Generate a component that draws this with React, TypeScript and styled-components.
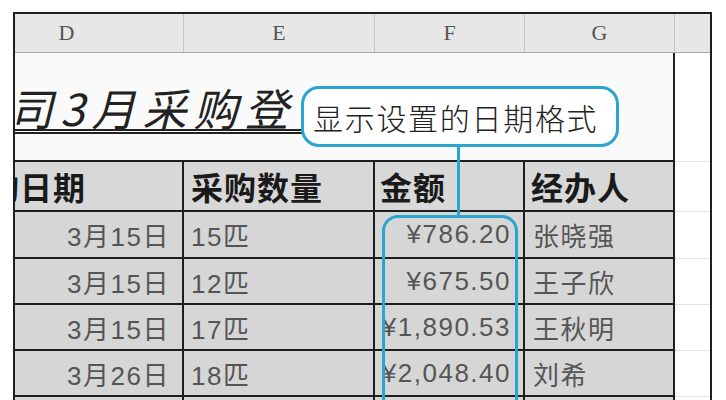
import React from "react";
import styled, { createGlobalStyle } from "styled-components";

const GlobalStyle = createGlobalStyle`
  html, body { margin: 0; padding: 0; background: #ffffff; overflow: hidden; }
  body { font-family: "Liberation Sans", "Noto Sans CJK SC", sans-serif; }
`;

const CYAN = "#2aa5cf";
const LINE = "#1e1e1e";
const COLS = "234px 191px 150px 150px 36px";

const Page = styled.div`
  position: relative;
  width: 726px;
  height: 400px;
  padding: 12px 14px 0 13px;
  box-sizing: border-box;
  overflow: hidden;
`;

const Frame = styled.div`
  height: 388px;
  border-left: 2px solid ${LINE};
  border-top: 2px solid ${LINE};
  border-right: 2px solid ${LINE};
  overflow: hidden;
  box-sizing: border-box;
`;

const Sheet = styled.div`
  margin-left: -65px;
  width: 763px;
  display: flex;
  flex-direction: column;
`;

const ColHeaderRow = styled.div`
  display: grid;
  grid-template-columns: ${COLS};
  height: 38px;
  background: #e7e7e7;
  border-bottom: 1px solid #a8a8a8;
`;

const ColLetter = styled.div`
  display: flex;
  align-items: center;
  justify-content: center;
  border-right: 1px solid #c6c6c6;
  font-family: "Liberation Serif", serif;
  font-size: 22px;
  color: #555;
  &:last-child { border-right: none; }
`;

const TitleRow = styled.div`
  display: grid;
  grid-template-columns: ${COLS};
  height: 109px;
`;

const TitleCell = styled.div`
  grid-column: 1 / span 4;
  background: #fafafa;
  border-right: 2px solid ${LINE};
  border-bottom: 2px solid ${LINE};
  display: flex;
  align-items: flex-end;
  padding: 0 0 31px 8px;
  overflow: hidden;
  white-space: nowrap;
`;

const TitleText = styled.span`
  font-family: "Noto Sans CJK SC", sans-serif;
  font-size: 44px;
  line-height: 44px;
  font-style: italic;
  letter-spacing: 7px;
  color: #222;
  text-decoration: underline double;
  text-decoration-thickness: 1.5px;
  text-underline-offset: 3px;
`;

const BlankCell = styled.div`
  background: #ffffff;
  border-bottom: 1px solid #e2e2e2;
`;

const Row = styled.div<{ $h: number }>`
  display: grid;
  grid-template-columns: ${COLS};
  height: ${(p) => p.$h}px;
`;

const Cell = styled.div<{ $align?: "left" | "right"; $pad: number; $head?: boolean }>`
  display: flex;
  align-items: center;
  justify-content: ${(p) => (p.$align === "right" ? "flex-end" : "flex-start")};
  padding-left: ${(p) => (p.$align === "right" ? 0 : p.$pad)}px;
  padding-right: ${(p) => (p.$align === "right" ? p.$pad : 0)}px;
  background: ${(p) => (p.$head ? "#d8d8d8" : "#d6d6d6")};
  border-right: 2px solid ${LINE};
  border-bottom: 2px solid ${LINE};
  white-space: nowrap;
  overflow: hidden;
  font-family: "Liberation Sans", "Noto Sans CJK SC", sans-serif;
  font-size: ${(p) => (p.$head ? 32 : 26)}px;
  font-weight: ${(p) => (p.$head ? 700 : 400)};
  color: ${(p) => (p.$head ? "#1a1a1a" : "#555555")};
  letter-spacing: ${(p) => (p.$head ? 1 : 1.5)}px;
`;

const Callout = styled.div`
  position: absolute;
  left: 301px;
  top: 86px;
  width: 318px;
  height: 61px;
  box-sizing: border-box;
  border: 3px solid ${CYAN};
  border-radius: 18px;
  background: #ffffff;
  display: flex;
  align-items: center;
  padding-left: 9px;
  font-family: "Noto Sans CJK SC", sans-serif;
  font-size: 30px;
  font-weight: 300;
  letter-spacing: 1.7px;
  color: #222;
  white-space: nowrap;
`;

const Connector = styled.div`
  position: absolute;
  left: 457px;
  top: 146px;
  width: 3px;
  height: 70px;
  background: ${CYAN};
`;

const Highlight = styled.div`
  position: absolute;
  left: 382px;
  top: 215px;
  width: 136px;
  height: 200px;
  box-sizing: border-box;
  border: 3px solid ${CYAN};
  border-radius: 16px;
`;

const rows = [
  ["3月15日", "15匹", "¥786.20", "张晓强"],
  ["3月15日", "12匹", "¥675.50", "王子欣"],
  ["3月15日", "17匹", "¥1,890.53", "王秋明"],
  ["3月26日", "18匹", "¥2,048.40", "刘希"],
  ["", "", "", ""],
];

export default function App() {
  return (
    <>
      <GlobalStyle />
      <Page>
        <Frame>
          <Sheet>
            <ColHeaderRow>
              {["D", "E", "F", "G", ""].map((l, i) => (
                <ColLetter key={i}>{l}</ColLetter>
              ))}
            </ColHeaderRow>
            <TitleRow>
              <TitleCell>
                <TitleText>公司3月采购登记表</TitleText>
              </TitleCell>
              <BlankCell />
            </TitleRow>
            <Row $h={50}>
              <Cell $head $pad={4}>采购日期</Cell>
              <Cell $head $pad={7}>采购数量</Cell>
              <Cell $head $pad={5}>金额</Cell>
              <Cell $head $pad={6}>经办人</Cell>
              <BlankCell />
            </Row>
            {rows.map((r, i) => (
              <Row key={i} $h={i === 0 ? 47 : 46}>
                <Cell $align="right" $pad={12}>{r[0]}</Cell>
                <Cell $pad={7}>{r[1]}</Cell>
                <Cell $align="right" $pad={12}>{r[2]}</Cell>
                <Cell $pad={8}>{r[3]}</Cell>
                <BlankCell />
              </Row>
            ))}
          </Sheet>
        </Frame>
        <Callout>显示设置的日期格式</Callout>
        <Connector />
        <Highlight />
      </Page>
    </>
  );
}
